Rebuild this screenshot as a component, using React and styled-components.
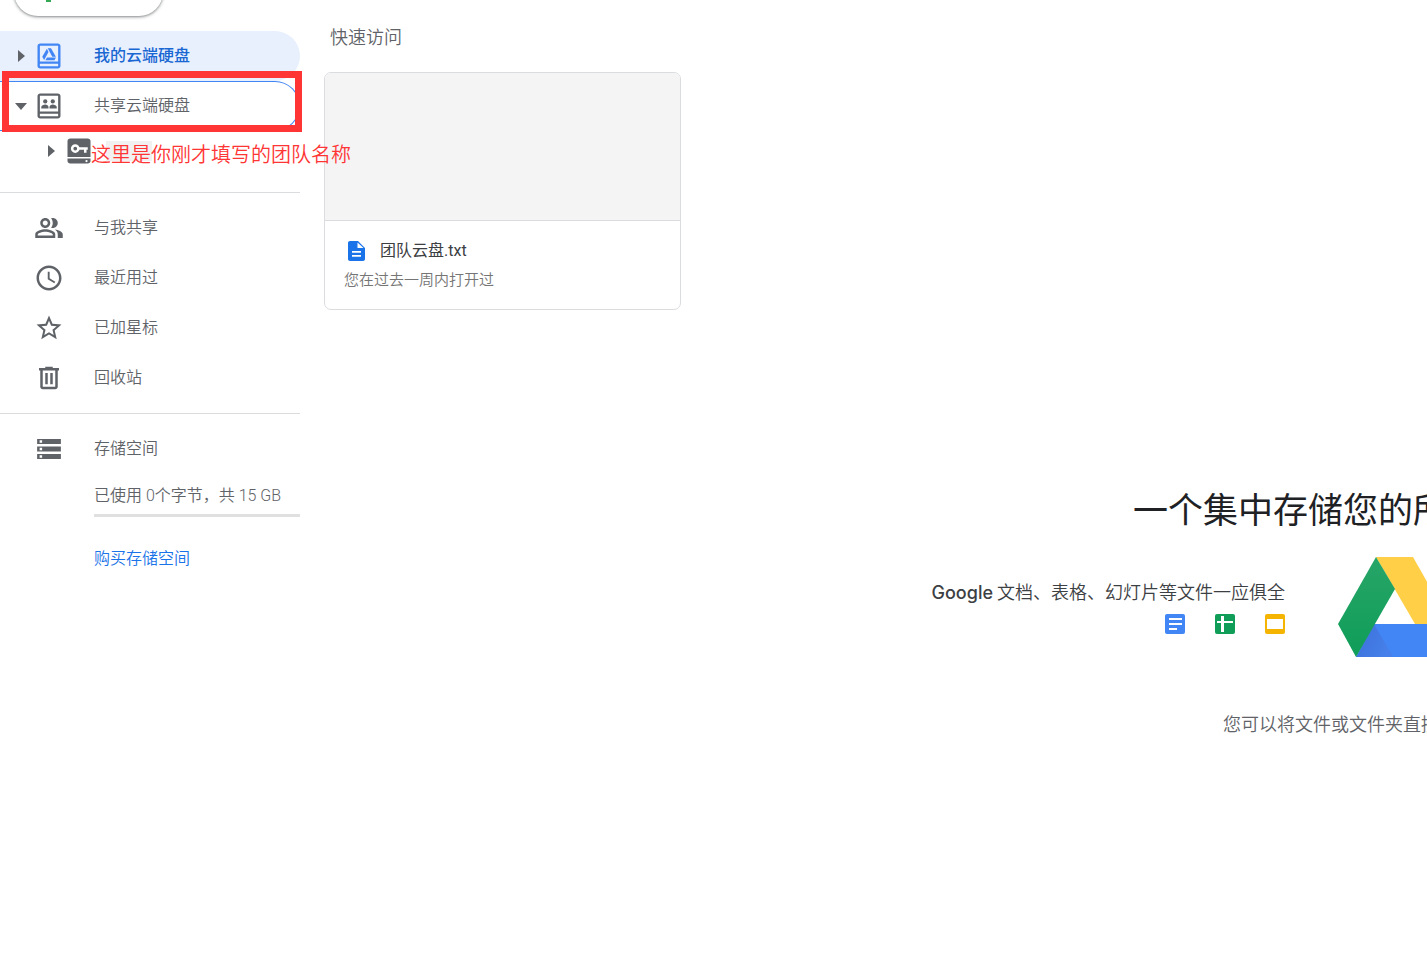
import React from "react";
import styled, { createGlobalStyle, css } from "styled-components";

const GlobalStyle = createGlobalStyle`
  *, *::before, *::after { box-sizing: border-box; }
  body {
    margin: 0;
    background: #fff;
    color: #5f6368;
    font-family: Roboto, "Noto Sans CJK SC", sans-serif;
    font-size: 16px;
    font-weight: 350;
    overflow: hidden;
  }
  a { color: inherit; text-decoration: none; }
  button { font: inherit; color: inherit; cursor: pointer; }
  h1, h2, h3, p, ul { margin: 0; padding: 0; font-weight: inherit; }
  svg { display: block; flex: none; }
`;

const Page = styled.div`
  display: flex;
  min-height: 100vh;
  overflow: hidden;
`;

const Sidebar = styled.nav`
  flex: none;
  width: 300px;
`;

const NewButton = styled.button`
  display: flex;
  align-items: center;
  width: 149px;
  height: 48px;
  margin: -32px 0 15px 14px;
  padding: 0 0 0 16px;
  border: 0;
  border-radius: 24px;
  background: #fff;
  box-shadow: 0 1px 2px rgba(60, 64, 67, 0.4), 0 1px 3px 1px rgba(60, 64, 67, 0.2);
`;

const Row = styled.div`
  display: flex;
  align-items: center;
  height: ${(p) => (p.$nested ? 40 : 50)}px;
  padding-left: ${(p) => (p.$nested ? 44 : 14)}px;
  border-radius: 0 25px 25px 0;
  ${(p) =>
    p.$active &&
    css`
      background: #e8f0fe;
      color: #1967d2;
      font-weight: 500;
    `}
  ${(p) =>
    p.$focused &&
    css`
      border: 1px solid #4285f4;
      border-left: 0;
    `}
`;

const Expander = styled.button`
  display: flex;
  align-items: center;
  justify-content: center;
  width: 14px;
  height: 24px;
  padding: 0;
  border: 0;
  background: none;
  color: #5f6368;
`;

const RowLink = styled.a`
  display: flex;
  align-items: center;
  gap: 30px;
  flex: 1;
  margin-left: ${(p) => (p.$plain ? 20 : 6)}px;
  line-height: 24px;
`;

const Marked = styled.div`
  position: relative;
`;

const MarkBox = styled.div`
  position: absolute;
  inset: -10px -2px -1px 2px;
  border: 7px solid #ff3535;
  pointer-events: none;
`;

const Note = styled.p`
  position: absolute;
  left: 91px;
  top: 8px;
  color: #ff3535;
  font-size: 20px;
  line-height: 32px;
  white-space: nowrap;
  z-index: 1;
`;

const NameShade = styled.span`
  width: 46px;
  height: 20px;
  margin-left: -18px;
  background: #f1f1f1;
`;

const Divider = styled.hr`
  margin: ${(p) => (p.$first ? "21px 0 10px" : "10px 0 10px")};
  border: 0;
  border-top: 1px solid #dadce0;
`;

const Quota = styled.div`
  margin-left: 94px;
`;

const QuotaText = styled.p`
  line-height: 24px;
  margin-top: 10px;
`;

const QuotaBar = styled.div`
  height: 3px;
  margin-top: 6px;
  background: #e0e0e0;
`;

const BuyLink = styled.a`
  display: inline-block;
  margin-top: 30px;
  color: #1a73e8;
  line-height: 24px;
`;

const Main = styled.main`
  flex: 1;
  min-width: 0;
  padding: 24px 0 0 24px;
`;

const SectionTitle = styled.h2`
  padding-left: 6px;
  font-size: 18px;
  line-height: 28px;
`;

const Card = styled.a`
  display: block;
  width: 357px;
  margin-top: 20px;
  border: 1px solid #dadce0;
  border-radius: 7px;
  overflow: hidden;
`;

const Thumb = styled.div`
  height: 148px;
  background: #f4f4f4;
  border-bottom: 1px solid #dadce0;
`;

const CardBody = styled.div`
  padding: 17px 19px;
`;

const CardTitle = styled.h3`
  display: flex;
  align-items: center;
  gap: 12px;
  color: #3c4043;
  font-size: 16px;
  line-height: 26px;
  font-weight: 400;
`;

const CardMeta = styled.p`
  margin-top: 4px;
  font-size: 15px;
  line-height: 24px;
  color: #757575;
`;

const Hero = styled.section`
  display: flex;
  flex-direction: column;
  align-items: flex-end;
  margin-top: 176px;
  white-space: nowrap;
`;

const HeroTitle = styled.h1`
  width: 294px;
  overflow: hidden;
  color: #202124;
  font-size: 35px;
  line-height: 52px;
  font-weight: 400;
`;

const HeroRow = styled.div`
  display: flex;
  gap: 53px;
  margin-top: 19px;
`;

const Apps = styled.div`
  display: flex;
  flex-direction: column;
  align-items: flex-end;
  gap: 7px;
  padding-top: 22px;
`;

const AppsText = styled.p`
  display: flex;
  gap: 4px;
  color: #3c4043;
  font-size: 18px;
  line-height: 28px;
`;

const Brand = styled.span`
  font-family: Inter, sans-serif;
  font-weight: 500;
`;

const AppIcons = styled.div`
  display: flex;
  gap: 30px;
`;

const LogoClip = styled.div`
  width: 89px;
  height: 100px;
  overflow: hidden;
`;

const Hint = styled.p`
  width: 204px;
  margin-top: 54px;
  overflow: hidden;
  font-size: 18px;
  line-height: 28px;
`;

const Icon = ({ children, size = 30, color = "#5f6368" }) => (
  <svg width={size} height={size} viewBox="0 0 24 24" fill={color} aria-hidden="true">
    {children}
  </svg>
);

const ArrowRight = () => (
  <svg width="7" height="12" viewBox="0 0 7 12" fill="#5f6368" aria-hidden="true">
    <path d="M0 0l7 6-7 6z" />
  </svg>
);

const ArrowDown = () => (
  <svg width="12" height="7" viewBox="0 0 12 7" fill="#5f6368" aria-hidden="true">
    <path d="M0 0h12L6 7z" />
  </svg>
);

const DriveFrame = () => (
  <path
    fillRule="evenodd"
    d="M5 2h14c1.200 0 2.200.9 2.200 2v16c0 1.100-1 2-2.200 2H5c-1.200 0-2.200-.9-2.200-2V4c0-1.100 1-2 2.200-2zM4.700 3.800v12.600h14.600V3.800zM4.700 18.200v2h14.600v-2z"
  />
);

const MyDriveIcon = () => (
  <Icon color="#4285f4">
    <DriveFrame />
    <path d="M10.300 6.200L6.600 12.600 8.100 15.100l3.500-6.400z" />
    <path d="M11 5.800h2.600l3.900 6.700h-2.900z" />
    <path d="M10.400 13.100h7.200l-1.300 2.200H9.100z" />
  </Icon>
);

const SharedDriveIcon = () => (
  <Icon>
    <DriveFrame />
    <circle cx="9" cy="8.300" r="1.700" />
    <circle cx="15" cy="8.300" r="1.700" />
    <path d="M5.800 14v-1.200c0-1.300 2-2 3.200-2s2.600.7 2.600 2V14zM12.400 14v-1.200c0-1.300 1.400-2 2.600-2s3.200.7 3.200 2V14z" />
  </Icon>
);

const TeamKeyIcon = () => (
  <Icon>
    <path d="M5 2h14c1.200 0 2.200.9 2.200 2v12.800H2.800V4C2.800 2.900 3.800 2 5 2zM2.800 17.900h18.400V20c0 1.100-1 2-2.200 2H5c-1.200 0-2.200-.9-2.200-2z" />
    <circle cx="9" cy="10" r="2.500" fill="none" stroke="#fff" strokeWidth="2" />
    <path d="M11.500 9h7.500v2h-1v2.300h-2V11h-4.500z" fill="#fff" />
    <circle cx="18" cy="20" r=".9" fill="#fff" />
  </Icon>
);

const PeopleIcon = () => (
  <Icon>
    <path d="M16.670 13.130C18.040 14.060 19 15.320 19 17v3h4v-3c0-2.180-3.570-3.470-6.330-3.870zM15 12c2.210 0 4-1.790 4-4s-1.790-4-4-4c-.47 0-.91.1-1.330.24C14.500 5.270 15 6.580 15 8s-.5 2.730-1.330 3.760c.42.14.86.24 1.330.24zM9 12c2.210 0 4-1.790 4-4s-1.790-4-4-4-4 1.790-4 4 1.790 4 4 4zm0-6c1.100 0 2 .9 2 2s-.9 2-2 2-2-.9-2-2 .9-2 2-2zM9 13c-2.670 0-8 1.340-8 4v3h16v-3c0-2.660-5.330-4-8-4zm6 5H3v-.99C3.200 16.290 6.300 15 9 15s5.800 1.290 6 2v1z" />
  </Icon>
);

const ClockIcon = () => (
  <Icon>
    <path d="M11.990 2C6.470 2 2 6.480 2 12s4.470 10 9.990 10C17.520 22 22 17.520 22 12S17.520 2 11.990 2zM12 20c-4.420 0-8-3.580-8-8s3.580-8 8-8 8 3.580 8 8-3.580 8-8 8zm.5-13H11v6l5.250 3.150.75-1.230-4.500-2.670z" />
  </Icon>
);

const StarIcon = () => (
  <Icon>
    <path d="M22 9.240l-7.190-.62L12 2 9.190 8.630 2 9.240l5.460 4.730L5.820 21 12 17.270 18.180 21l-1.630-7.030L22 9.240zM12 15.400l-3.760 2.270 1-4.280-3.320-2.880 4.380-.38L12 6.100l1.710 4.040 4.380.38-3.320 2.880 1 4.280L12 15.400z" />
  </Icon>
);

const TrashIcon = () => (
  <Icon>
    <path d="M15 4V3H9v1H4v2h1v13c0 1.100.9 2 2 2h10c1.100 0 2-.9 2-2V6h1V4h-5zm2 15H7V6h10v13zM9 8h2v9H9zm4 0h2v9h-2z" />
  </Icon>
);

const StorageIcon = () => (
  <Icon>
    <path
      fillRule="evenodd"
      d="M2.500 4h19v4h-19zM4.500 5v2h2V5zM2.500 10h19v4h-19zM4.500 11v2h2v-2zM2.500 16h19v4h-19zM4.500 17v2h2v-2z"
    />
  </Icon>
);

const PlusIcon = () => (
  <svg width="36" height="36" viewBox="0 0 36 36" aria-hidden="true">
    <path fill="#34a853" d="M16 16v12h5V20z" />
    <path fill="#4285f4" d="M30 16H20l-3 4h13z" />
    <path fill="#fbbc05" d="M6 16v4h10l4-4z" />
    <path fill="#ea4335" d="M20 16V8h-4v12z" />
  </svg>
);

const DocFileIcon = () => (
  <Icon size={24} color="#1a73e8">
    <path
      fillRule="evenodd"
      d="M14 2H6c-1.100 0-2 .9-2 2v16c0 1.100.9 2 2 2h13c1.100 0 2-.9 2-2V9zM13.500 9V3.500L19.500 9zM8 12h9v1.700H8zM8 16h9v1.700H8z"
    />
  </Icon>
);

const AppIcon = ({ color, label, children }) => (
  <svg width="20" height="20" viewBox="0 0 20 20" role="img" aria-label={label}>
    <rect width="20" height="20" rx="2" fill={color} />
    <g fill="#fff">{children}</g>
  </svg>
);

const DriveLogo = () => (
  <svg width="113" height="100" viewBox="0 0 113 100" role="img" aria-label="Google Drive">
    <defs>
      <linearGradient id="fold" x1="0" y1="0" x2="1" y2="0.4">
        <stop offset="0" stopColor="#3a6fd8" />
        <stop offset="1" stopColor="#4780ea" />
      </linearGradient>
      <linearGradient id="leaf" x1="0" y1="1" x2="0" y2="0">
        <stop offset="0" stopColor="#0f9d58" />
        <stop offset="1" stopColor="#27a568" />
      </linearGradient>
    </defs>
    <path fill="#ffcf48" d="M38 0h37l38 67H77z" />
    <path fill="#4285f4" d="M36 67h77l-18 33H18z" />
    <path fill="url(#fold)" d="M36 67l19 33H18z" />
    <path fill="url(#leaf)" d="M38 0l19 32-39 68L0 67z" />
  </svg>
);

const places = [
  { label: "与我共享", icon: <PeopleIcon /> },
  { label: "最近用过", icon: <ClockIcon /> },
  { label: "已加星标", icon: <StarIcon /> },
  { label: "回收站", icon: <TrashIcon /> },
];

export default function App() {
  return (
    <>
      <GlobalStyle />
      <Page>
        <Sidebar>
          <NewButton type="button" aria-label="新建">
            <PlusIcon />
          </NewButton>
          <Row $active>
            <Expander type="button" aria-label="展开"><ArrowRight /></Expander>
            <RowLink href="#my-drive"><MyDriveIcon />我的云端硬盘</RowLink>
          </Row>
          <Marked>
            <Row $focused>
              <Expander type="button" aria-label="收起"><ArrowDown /></Expander>
              <RowLink href="#shared-drives"><SharedDriveIcon />共享云端硬盘</RowLink>
            </Row>
            <MarkBox />
          </Marked>
          <Marked>
            <Row $nested>
              <Expander type="button" aria-label="展开"><ArrowRight /></Expander>
              <RowLink href="#team" aria-label="团队"><TeamKeyIcon /><NameShade /></RowLink>
            </Row>
            <Note>这里是你刚才填写的团队名称</Note>
          </Marked>
          <Divider $first />
          {places.map((place) => (
            <Row key={place.label}>
              <RowLink $plain href="#place">{place.icon}{place.label}</RowLink>
            </Row>
          ))}
          <Divider />
          <Row>
            <RowLink $plain href="#storage"><StorageIcon />存储空间</RowLink>
          </Row>
          <Quota>
            <QuotaText>已使用 0个字节，共 15 GB</QuotaText>
            <QuotaBar />
            <BuyLink href="#buy">购买存储空间</BuyLink>
          </Quota>
        </Sidebar>
        <Main>
          <SectionTitle>快速访问</SectionTitle>
          <Card href="#file">
            <Thumb />
            <CardBody>
              <CardTitle><DocFileIcon /><span>团队云盘.txt</span></CardTitle>
              <CardMeta>您在过去一周内打开过</CardMeta>
            </CardBody>
          </Card>
          <Hero>
            <HeroTitle>一个集中存储您的所</HeroTitle>
            <HeroRow>
              <Apps>
                <AppsText><Brand>Google</Brand><span>文档、表格、幻灯片等文件一应俱全</span></AppsText>
                <AppIcons>
                  <AppIcon color="#4285f4" label="文档">
                    <path d="M4 4h13v2H4zM4 9h13v2H4zM4 14h8v2H4z" />
                  </AppIcon>
                  <AppIcon color="#0f9d58" label="表格">
                    <path d="M6 2h3v5h9v2H9v9H6V9H2V7h4z" />
                  </AppIcon>
                  <AppIcon color="#f4b400" label="幻灯片">
                    <path d="M2 5h16v10H2z" />
                  </AppIcon>
                </AppIcons>
              </Apps>
              <LogoClip><DriveLogo /></LogoClip>
            </HeroRow>
            <Hint>您可以将文件或文件夹直接</Hint>
          </Hero>
        </Main>
      </Page>
    </>
  );
}
